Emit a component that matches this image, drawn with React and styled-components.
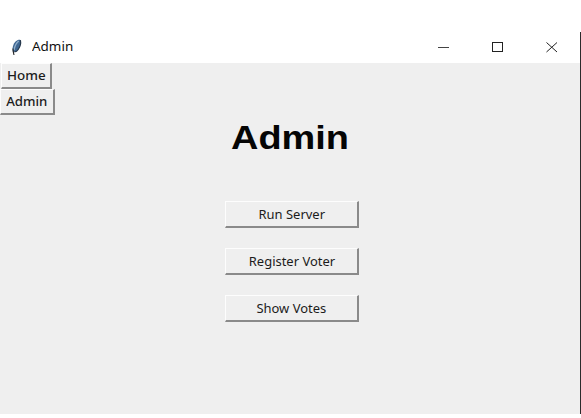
import React from "react";
import styled, { createGlobalStyle } from "styled-components";

const GlobalStyle = createGlobalStyle`
  * { box-sizing: border-box; }
  body { margin: 0; background: #fff; overflow: hidden; }
`;

const Page = styled.div`
  width: 581px;
  height: 418px;
  padding: 32px 0 4px;
  background: #fff;
`;

const Window = styled.div`
  display: flex;
  flex-direction: column;
  height: 382px;
  border-right: 1px solid #2b2b2b;
  background: #efefef;
  font-family: "Noto Sans", "Open Sans", sans-serif;
  color: #111;
`;

const TitleBar = styled.header`
  display: flex;
  align-items: center;
  height: 31px;
  flex: none;
  padding-left: 10px;
  background: #fff;
`;

const Title = styled.span`
  margin-left: 8px;
  font-size: 12px;
  line-height: 20px;
  padding-bottom: 1px;
  transform: scaleX(1.12);
  transform-origin: left;
`;

const Controls = styled.div`
  display: flex;
  margin: 0 1px 0 auto;
`;

const Control = styled.span`
  display: grid;
  place-items: center;
  width: 54px;
  height: 31px;
  padding-bottom: 1px;
`;

const Nav = styled.nav`
  display: flex;
  flex-direction: column;
  align-items: flex-start;
  height: 53px;
`;

const Button = styled.button`
  display: block;
  padding: 0;
  border: solid;
  border-width: 1px 2px 2px 1px;
  border-color: #fdfdfd #8a8a8a #8a8a8a #fdfdfd;
  background: #efefef;
  color: #1c1c1c;
  font: 12px/20px "Noto Sans", "Open Sans", sans-serif;
  white-space: nowrap;
`;

const NavButton = styled(Button)`
  width: ${(p) => p.$width}px;
  height: 26px;
  margin-left: ${(p) => p.$indent || 0}px;
  font-weight: 500;
`;

const ActionButton = styled(Button)`
  width: 134px;
  height: 27px;
  padding-top: 2px;
`;

const Label = styled.span`
  display: inline-block;
  transform: scaleX(${(p) => p.$stretch});
`;

const Heading = styled.h1`
  margin: 0 0 0 231px;
  width: max-content;
  padding-top: 1px;
  font: bold 34px/40px "Liberation Sans", Arial, sans-serif;
  color: #050505;
  transform: scaleX(1.115);
  transform-origin: left;
`;

const Actions = styled.main`
  display: flex;
  flex-direction: column;
  gap: 20px;
  margin: 44px 0 0 225px;
`;

function Feather() {
  return (
    <svg width="14" height="18" viewBox="0 0 14 18">
      <g transform="translate(0 -1)">
        <path d="M3 14C1.8 10.5 3 5.5 6.2 3C8 1.6 10 1.4 10.4 2.2C11 5 10 9 8.2 11.5C6.8 13.4 5 14.2 3 14Z" fill="#3f6792" />
        <path d="M8.8 3C6 5 4.6 9 4 12" fill="none" stroke="#8fadca" strokeWidth="1.4" />
        <path d="M10.4 2.2C11 5 10 9 8.2 11.5C7.2 13 5.8 13.8 4.4 14" fill="none" stroke="#26384c" strokeWidth="1.2" />
        <path d="M3 10.5L3.2 13.5L4 17" fill="none" stroke="#222" strokeWidth="1.1" />
      </g>
    </svg>
  );
}

const actions = ["Run Server", "Register Voter", "Show Votes"];

export default function App() {
  return (
    <>
      <GlobalStyle />
      <Page>
        <Window>
          <TitleBar>
            <Feather />
            <Title>Admin</Title>
            <Controls>
              <Control>
                <svg width="12" height="12"><path d="M0 6.5H11" stroke="#444" /></svg>
              </Control>
              <Control>
                <svg width="12" height="12"><rect x="0.5" y="1.5" width="10" height="9" fill="none" stroke="#222" /></svg>
              </Control>
              <Control>
                <svg width="12" height="12"><path d="M0.5 1.5L11 11M11 1.5L0.5 11" stroke="#222" /></svg>
              </Control>
            </Controls>
          </TitleBar>
          <Nav>
            <NavButton $width={51} $indent={1}><Label $stretch={1.12}>Home</Label></NavButton>
            <NavButton $width={55}><Label $stretch={1.1}>Admin</Label></NavButton>
          </Nav>
          <Heading>Admin</Heading>
          <Actions>
            {actions.map((name) => (
              <ActionButton key={name}><Label $stretch={1.08}>{name}</Label></ActionButton>
            ))}
          </Actions>
        </Window>
      </Page>
    </>
  );
}
